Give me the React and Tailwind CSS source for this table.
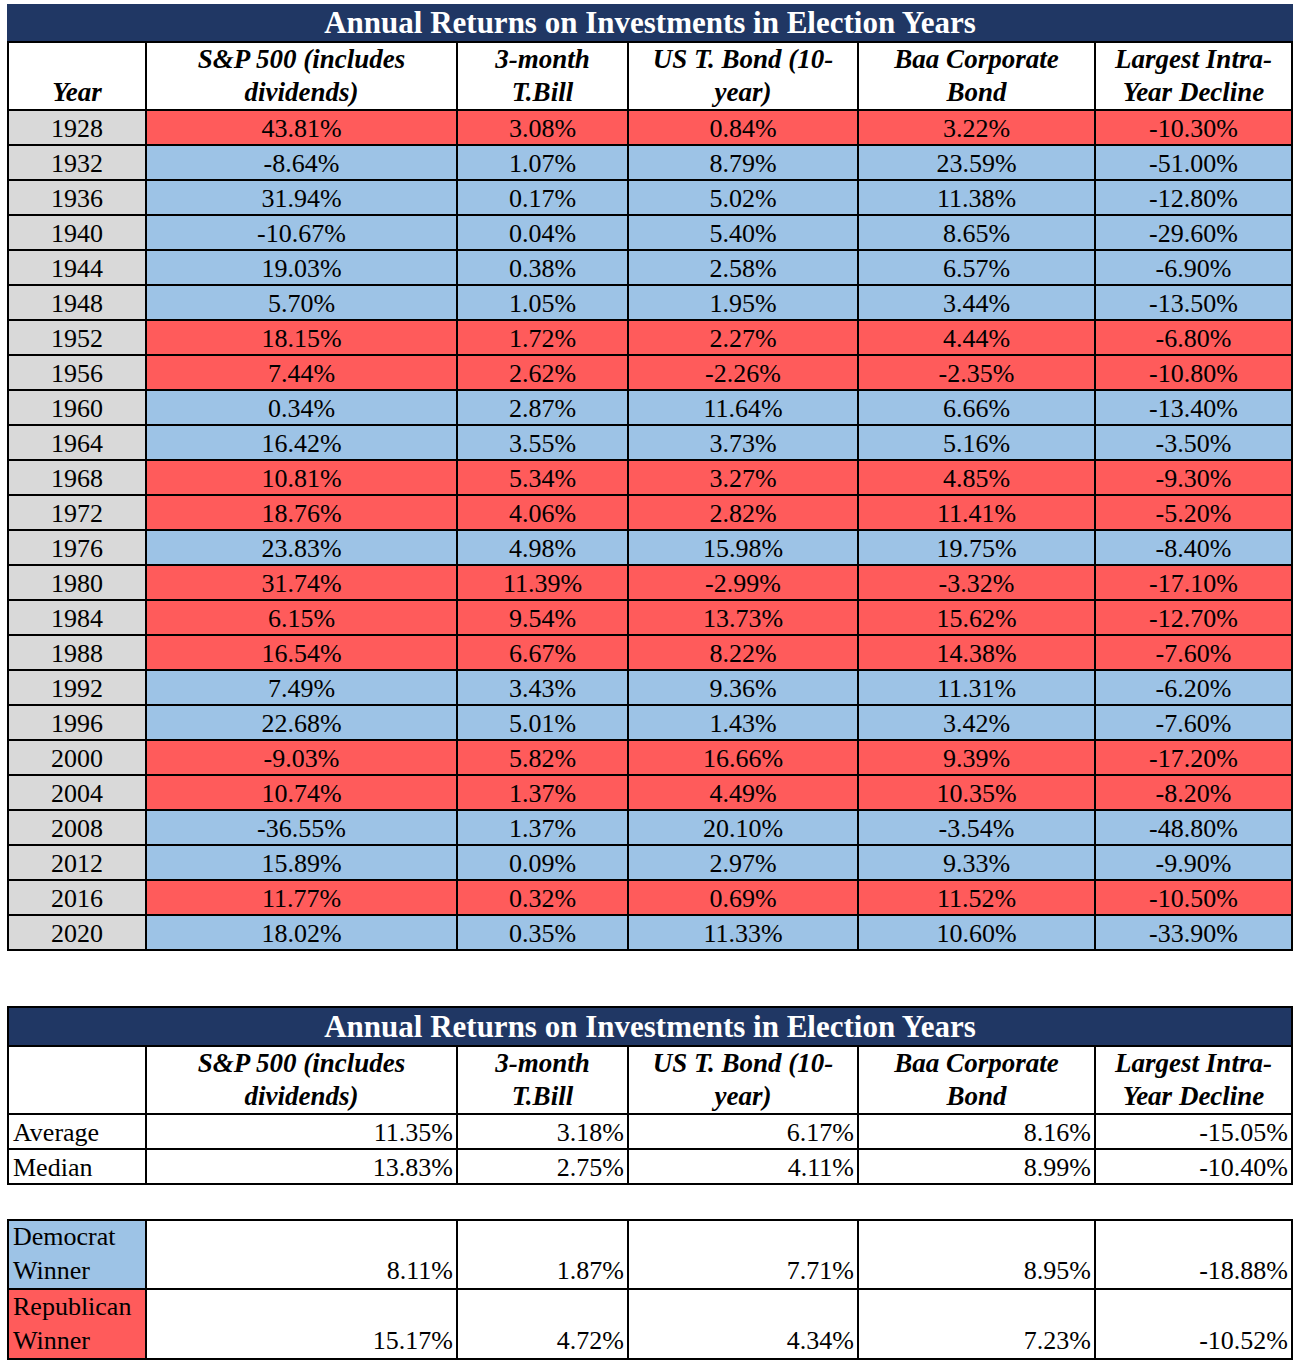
import React from 'react';

const RED = 'bg-[#ff5b5b]';
const BLUE = 'bg-[#9dc3e6]';

const rows = [
  ['1928', 'r', '43.81%', '3.08%', '0.84%', '3.22%', '-10.30%'],
  ['1932', 'b', '-8.64%', '1.07%', '8.79%', '23.59%', '-51.00%'],
  ['1936', 'b', '31.94%', '0.17%', '5.02%', '11.38%', '-12.80%'],
  ['1940', 'b', '-10.67%', '0.04%', '5.40%', '8.65%', '-29.60%'],
  ['1944', 'b', '19.03%', '0.38%', '2.58%', '6.57%', '-6.90%'],
  ['1948', 'b', '5.70%', '1.05%', '1.95%', '3.44%', '-13.50%'],
  ['1952', 'r', '18.15%', '1.72%', '2.27%', '4.44%', '-6.80%'],
  ['1956', 'r', '7.44%', '2.62%', '-2.26%', '-2.35%', '-10.80%'],
  ['1960', 'b', '0.34%', '2.87%', '11.64%', '6.66%', '-13.40%'],
  ['1964', 'b', '16.42%', '3.55%', '3.73%', '5.16%', '-3.50%'],
  ['1968', 'r', '10.81%', '5.34%', '3.27%', '4.85%', '-9.30%'],
  ['1972', 'r', '18.76%', '4.06%', '2.82%', '11.41%', '-5.20%'],
  ['1976', 'b', '23.83%', '4.98%', '15.98%', '19.75%', '-8.40%'],
  ['1980', 'r', '31.74%', '11.39%', '-2.99%', '-3.32%', '-17.10%'],
  ['1984', 'r', '6.15%', '9.54%', '13.73%', '15.62%', '-12.70%'],
  ['1988', 'r', '16.54%', '6.67%', '8.22%', '14.38%', '-7.60%'],
  ['1992', 'b', '7.49%', '3.43%', '9.36%', '11.31%', '-6.20%'],
  ['1996', 'b', '22.68%', '5.01%', '1.43%', '3.42%', '-7.60%'],
  ['2000', 'r', '-9.03%', '5.82%', '16.66%', '9.39%', '-17.20%'],
  ['2004', 'r', '10.74%', '1.37%', '4.49%', '10.35%', '-8.20%'],
  ['2008', 'b', '-36.55%', '1.37%', '20.10%', '-3.54%', '-48.80%'],
  ['2012', 'b', '15.89%', '0.09%', '2.97%', '9.33%', '-9.90%'],
  ['2016', 'r', '11.77%', '0.32%', '0.69%', '11.52%', '-10.50%'],
  ['2020', 'b', '18.02%', '0.35%', '11.33%', '10.60%', '-33.90%'],
];

const headers = [
  ['S&P 500 (includes', 'dividends)'],
  ['3-month', 'T.Bill'],
  ['US T. Bond (10-', 'year)'],
  ['Baa Corporate', 'Bond'],
  ['Largest Intra-', 'Year Decline'],
];

const grid = 'grid grid-cols-[138px_311px_171px_230px_237px_197px] w-[1286px] border-l-2 border-t-2 border-black';
const cell = 'border-r-2 border-b-2 border-black';

function HeaderRow({ first }) {
  return (
    <>
      <div className={`${cell} h-[68px] bg-white flex items-end justify-center text-[27px] leading-[33px] font-bold italic`}>
        {first}
      </div>
      {headers.map((h) => (
        <div key={h[0]} className={`${cell} h-[68px] bg-white flex flex-col items-center justify-end text-[27px] leading-[33px] font-bold italic`}>
          <span>{h[0]}</span>
          <span>{h[1]}</span>
        </div>
      ))}
    </>
  );
}

function Title() {
  return 'Annual Returns on Investments in Election Years';
}

export default function App() {
  return (
    <div className="w-[1299px] h-[1361px] bg-white pl-[7px] pt-[4px] font-['Liberation_Serif','Times_New_Roman',serif] text-black">
      {/* main table */}
      <div className="w-[1286px] h-[37px] bg-[#203764] text-white text-[31px] font-bold leading-[37px] text-center">
        <Title />
      </div>
      <div className={grid}>
        <HeaderRow first="Year" />
        {rows.map((r) => {
          const bg = r[1] === 'r' ? RED : BLUE;
          return (
            <React.Fragment key={r[0]}>
              <div className={`${cell} h-[35px] bg-[#d9d9d9] text-[26px] leading-[35px] text-center`}>{r[0]}</div>
              {r.slice(2).map((v, i) => (
                <div key={i} className={`${cell} h-[35px] ${bg} text-[26px] leading-[35px] text-center`}>{v}</div>
              ))}
            </React.Fragment>
          );
        })}
      </div>

      {/* summary table */}
      <div className={`${grid} mt-[55px]`}>
        <div className={`${cell} col-span-6 h-[39px] bg-[#203764] text-white text-[31px] font-bold leading-[37px] text-center`}>
          <Title />
        </div>
        <HeaderRow first="" />
        {[
          ['Average', '11.35%', '3.18%', '6.17%', '8.16%', '-15.05%'],
          ['Median', '13.83%', '2.75%', '4.11%', '8.99%', '-10.40%'],
        ].map((r) => (
          <React.Fragment key={r[0]}>
            <div className={`${cell} h-[35px] text-[26px] leading-[35px] pl-[4px]`}>{r[0]}</div>
            {r.slice(1).map((v, i) => (
              <div key={i} className={`${cell} h-[35px] text-[26px] leading-[35px] text-right pr-[3px]`}>{v}</div>
            ))}
          </React.Fragment>
        ))}
      </div>

      {/* party winners */}
      <div className={`${grid} mt-[34px]`}>
        {[
          ['Democrat', BLUE, 'h-[69px]', '8.11%', '1.87%', '7.71%', '8.95%', '-18.88%'],
          ['Republican', RED, 'h-[70px]', '15.17%', '4.72%', '4.34%', '7.23%', '-10.52%'],
        ].map((r) => (
          <React.Fragment key={r[0]}>
            <div className={`${cell} ${r[2]} ${r[1]} flex flex-col justify-end text-[26px] leading-[34px] pl-[4px]`}>
              <span>{r[0]}</span>
              <span>Winner</span>
            </div>
            {r.slice(3).map((v, i) => (
              <div key={i} className={`${cell} ${r[2]} flex items-end justify-end text-[26px] leading-[34px] pr-[3px]`}>{v}</div>
            ))}
          </React.Fragment>
        ))}
      </div>
    </div>
  );
}
